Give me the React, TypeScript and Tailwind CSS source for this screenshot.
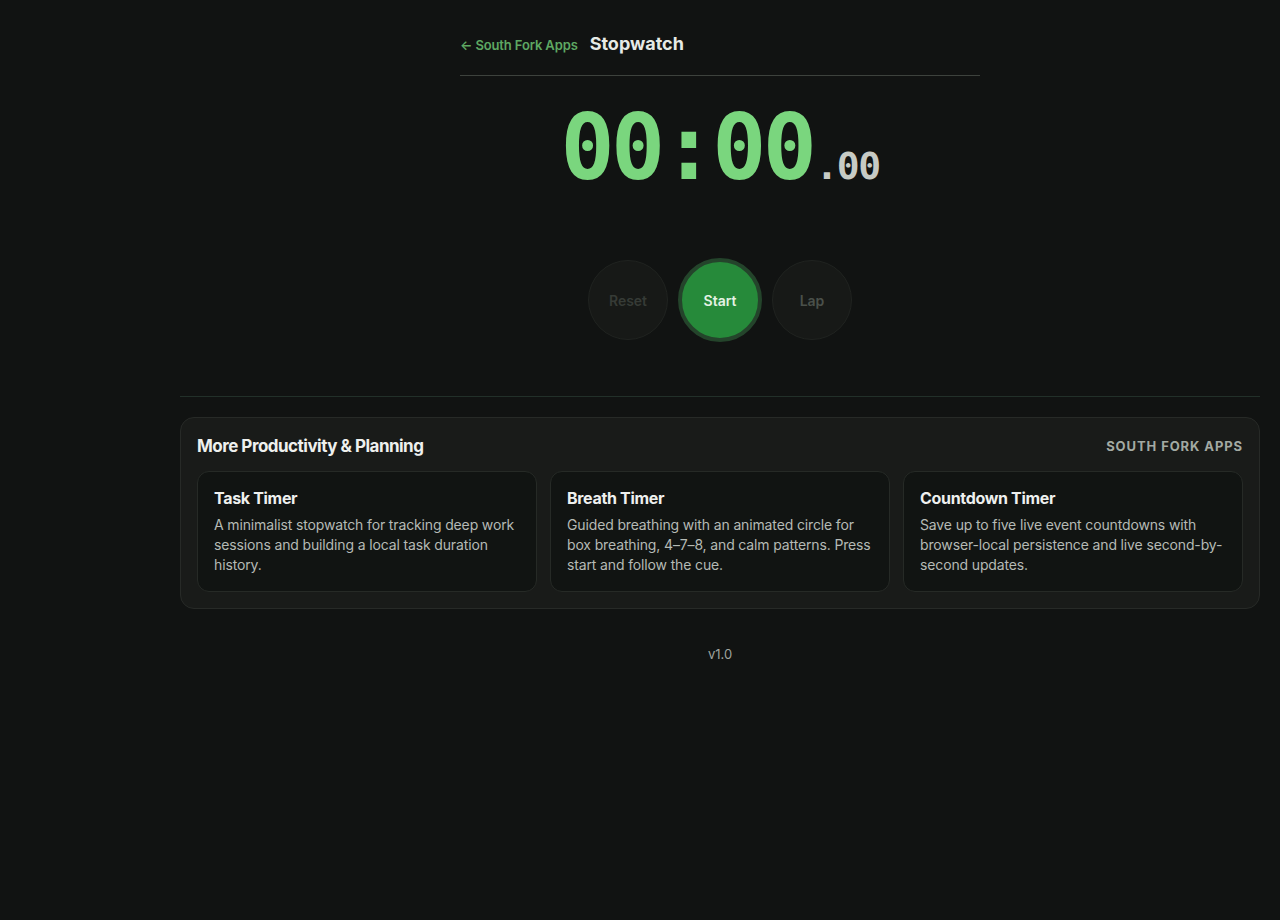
import React from 'react';

const apps = [
  {
    title: 'Task Timer',
    desc: 'A minimalist stopwatch for tracking deep work sessions and building a local task duration history.',
  },
  {
    title: 'Breath Timer',
    desc: 'Guided breathing with an animated circle for box breathing, 4–7–8, and calm patterns. Press start and follow the cue.',
  },
  {
    title: 'Countdown Timer',
    desc: 'Save up to five live event countdowns with browser-local persistence and live second-by-second updates.',
  },
];

const sans = { fontFamily: 'Inter, "Noto Sans", sans-serif' };

export default function App() {
  return (
    <div className="min-h-screen w-full bg-[#111312] flex text-[#e8ece8]" style={sans}>
      <div className="w-[160px] shrink-0" />
      <main className="flex-1 px-5">
        {/* header */}
        <div className="w-[520px] mx-auto h-[76px] pt-[31px] border-b border-[#3d423d] flex items-baseline gap-3">
          <a className="text-[13px] font-semibold text-[#5ea862] tracking-[-0.01em]">← South Fork Apps</a>
          <h1 className="text-[18px] leading-[26px] font-bold text-[#e6eae6]">Stopwatch</h1>
        </div>

        {/* timer */}
        <div className="flex justify-center items-baseline pt-[26px] h-[180px] font-['DejaVu_Sans_Mono',monospace] font-bold">
          <span className="text-[90px] leading-[92px] text-[#7ad67e] tracking-[-0.04em]">00:00</span>
          <span className="ml-[2px] text-[38px] leading-[38px] text-[#c7cbc5] tracking-[-0.04em]">.00</span>
        </div>

        {/* controls */}
        <div className="flex justify-center items-center gap-[10px] mt-[2px]">
          <button className="w-[80px] h-[80px] rounded-full bg-[#171917] border border-[#202320] text-[14px] font-semibold text-[#363b36]">
            Reset
          </button>
          <button className="w-[84px] h-[84px] rounded-full bg-[#268a3a] border-[4px] border-[#24442b] text-[14px] font-semibold text-[#e4f2e4]">
            Start
          </button>
          <button className="w-[80px] h-[80px] rounded-full bg-[#171917] border border-[#202320] text-[14px] font-semibold text-[#4a504a]">
            Lap
          </button>
        </div>

        <div className="mt-[54px] border-t border-[#223029]" />

        {/* more apps */}
        <section className="mt-[20px] rounded-[14px] bg-[#191b19] border border-[#272a27] px-[16px] pt-[17px] pb-[16px]">
          <div className="flex items-center justify-between h-[24px]">
            <h2 className="text-[17px] font-bold text-[#eef0ee] tracking-[-0.03em]">More Productivity &amp; Planning</h2>
            <span className="text-[13px] font-bold tracking-[0.07em] text-[#a3aaa3]">SOUTH FORK APPS</span>
          </div>
          <div className="grid grid-cols-3 gap-[13px] mt-[12px]">
            {apps.map((a) => (
              <div key={a.title} className="h-[121px] rounded-[12px] bg-[#111412] border border-[#262a26] px-[16px] pt-[16px]">
                <h3 className="text-[16px] leading-[20px] font-bold text-[#eef0ee] tracking-[-0.02em]">{a.title}</h3>
                <p className="mt-[7px] text-[14px] leading-[20px] text-[#b5bab5] tracking-[-0.01em]">{a.desc}</p>
              </div>
            ))}
          </div>
        </section>

        <div className="mt-[35px] text-center text-[13px] leading-[20px] text-[#9fa49f]">v1.0</div>
      </main>
    </div>
  );
}
